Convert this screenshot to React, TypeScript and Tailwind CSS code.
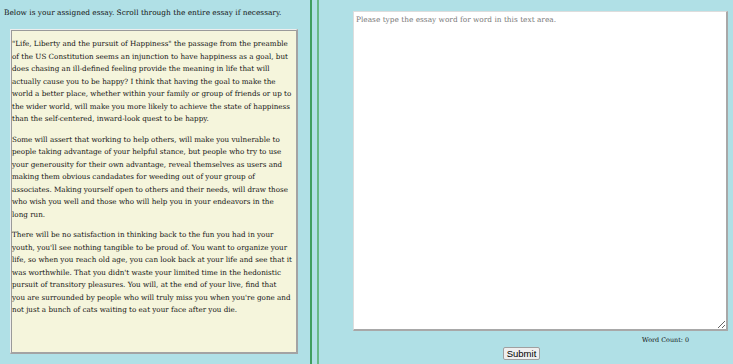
import React from "react";

const paragraphs: string[][] = [
  [
    '"Life, Liberty and the pursuit of Happiness" the passage from the preamble',
    "of the US Constitution seems an injunction to have happiness as a goal, but",
    "does chasing an ill-defined feeling provide the meaning in life that will",
    "actually cause you to be happy? I think that having the goal to make the",
    "world a better place, whether within your family or group of friends or up to",
    "the wider world, will make you more likely to achieve the state of happiness",
    "than the self-centered, inward-look quest to be happy.",
  ],
  [
    "Some will assert that working to help others, will make you vulnerable to",
    "people taking advantage of your helpful stance, but people who try to use",
    "your generousity for their own advantage, reveal themselves as users and",
    "making them obvious candadates for weeding out of your group of",
    "associates. Making yourself open to others and their needs, will draw those",
    "who wish you well and those who will help you in your endeavors in the",
    "long run.",
  ],
  [
    "There will be no satisfaction in thinking back to the fun you had in your",
    "youth, you'll see nothing tangible to be proud of. You want to organize your",
    "life, so when you reach old age, you can look back at your life and see that it",
    "was worthwhile. That you didn't waste your limited time in the hedonistic",
    "pursuit of transitory pleasures. You will, at the end of your live, find that",
    "you are surrounded by people who will truly miss you when you're gone and",
    "not just a bunch of cats waiting to eat your face after you die.",
  ],
];

const serif = "font-['DejaVu_Serif','Liberation_Serif',serif]";

export default function App() {
  return (
    <div className={`flex h-[364px] w-[733px] overflow-hidden bg-[#b0e0e6] text-[#111] ${serif}`}>
      {/* essay column */}
      <div className="flex w-[310px] shrink-0 flex-col">
        <p className="mt-[7px] pl-[4px] text-[7.4px] leading-[12px] whitespace-nowrap">
          Below is your assigned essay. Scroll through the entire essay if necessary.
        </p>
        <div className="mt-[10px] ml-[10px] h-[325px] w-[288px] border-t border-l border-b-2 border-r-2 border-t-[#eeeeee] border-l-[#eeeeee] border-b-[#a3a3a3] border-r-[#a3a3a3]">
          <div className="h-full border-t border-l border-[#9a9a9a] bg-[#f5f5dc] pt-[7px] text-[7.2px] leading-[12.5px]">
            {paragraphs.map((lines, i) => (
              <p key={i} className="mb-[8px] whitespace-nowrap">
                {lines.map((line, j) => (
                  <React.Fragment key={j}>
                    {line}
                    {j < lines.length - 1 && <br />}
                  </React.Fragment>
                ))}
              </p>
            ))}
          </div>
        </div>
      </div>

      {/* divider */}
      <div className="w-[2px] shrink-0 bg-[#3f9e5f]" />
      <div className="w-[5px] shrink-0" />
      <div className="w-[2px] shrink-0 bg-[#68b987]" />

      {/* typing column */}
      <div className="flex flex-1 flex-col">
        <div className="mt-[11px] ml-[34px] mr-[5px] h-[320px] border-t border-l border-b-2 border-r-2 border-t-[#dddddd] border-l-[#dddddd] border-b-[#a8a8a8] border-r-[#a8a8a8]">
          <textarea
            placeholder="Please type the essay word for word in this text area."
            className={`block h-full w-full resize bg-white px-[2px] py-[2px] text-[7.4px] leading-[12px] text-[#333] outline-none placeholder:text-[#777] ${serif}`}
          />
        </div>
        <div className="mt-[5px] mr-[44px] text-right text-[6.4px] leading-[8px]">
          Word Count: 0
        </div>
        <div className="mt-[3px] flex justify-center pr-[9px]">
          <button
            type="button"
            className="h-[13px] rounded-[2px] border border-[#a0a0a0] bg-[#efefef] px-[3px] font-['Liberation_Sans',Arial,sans-serif] text-[9.5px] leading-[11px] text-black"
          >
            Submit
          </button>
        </div>
      </div>
    </div>
  );
}
